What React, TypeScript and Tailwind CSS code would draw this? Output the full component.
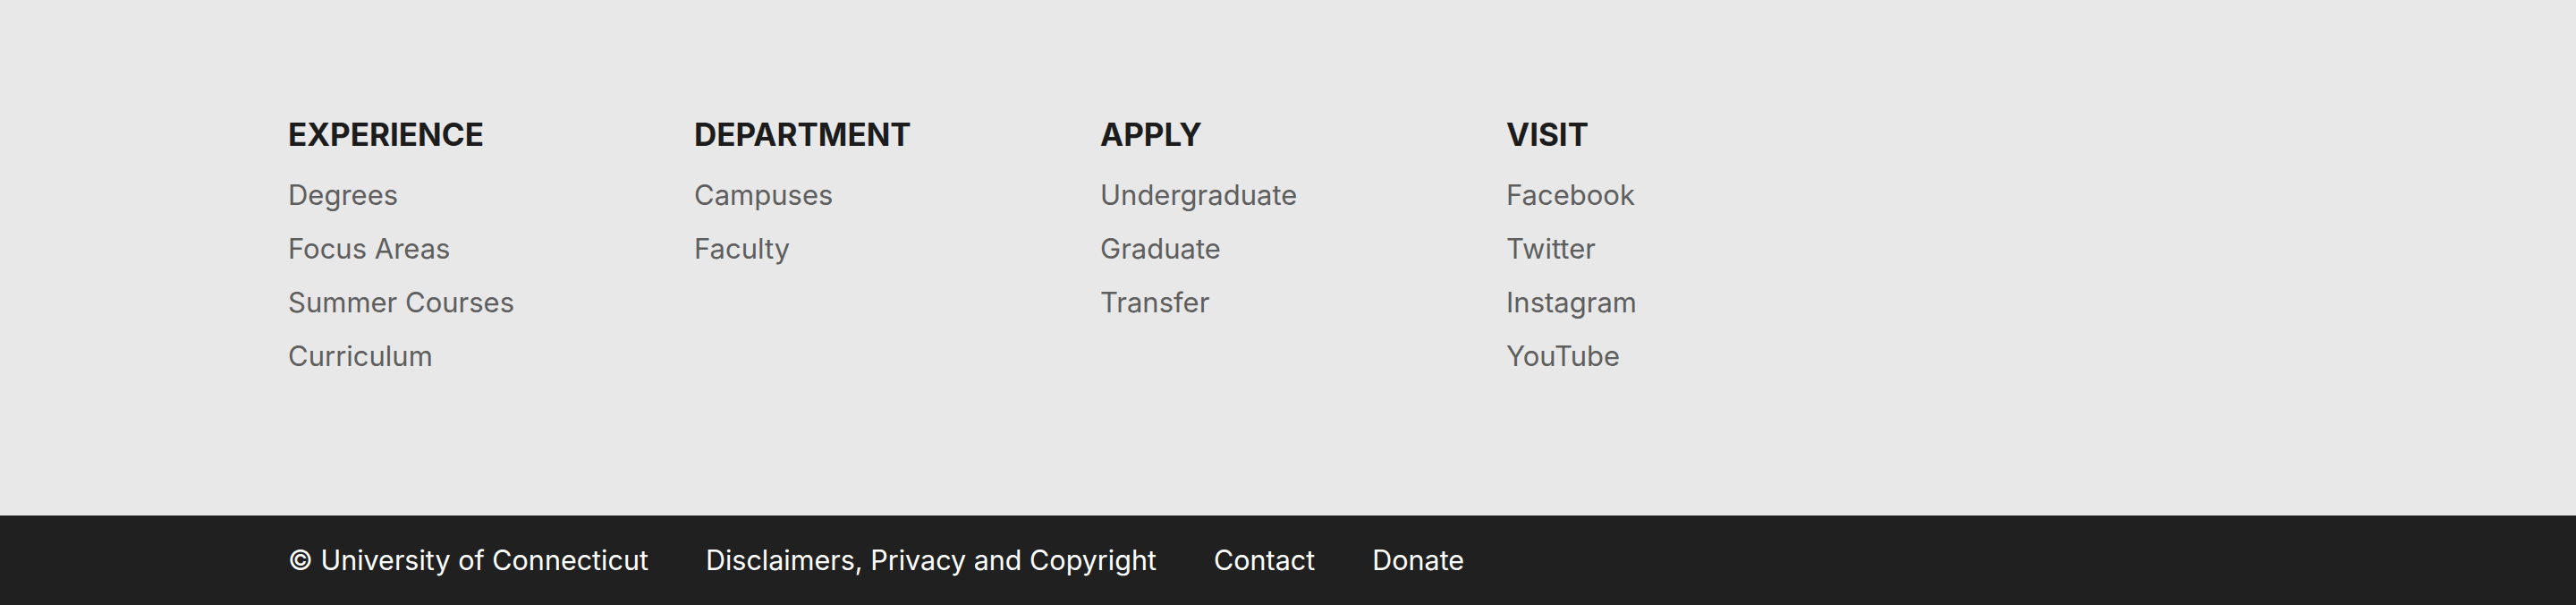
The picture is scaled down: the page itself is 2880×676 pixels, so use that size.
const columns = [
  { title: "EXPERIENCE", links: ["Degrees", "Focus Areas", "Summer Courses", "Curriculum"] },
  { title: "DEPARTMENT", links: ["Campuses", "Faculty"] },
  { title: "APPLY", links: ["Undergraduate", "Graduate", "Transfer"] },
  { title: "VISIT", links: ["Facebook", "Twitter", "Instagram", "YouTube"] },
];

const bottomLinks = [
  "© University of Connecticut",
  "Disclaimers, Privacy and Copyright",
  "Contact",
  "Donate",
];

export default function App() {
  return (
    <footer className="w-full font-['Inter',sans-serif]">
      <div className="bg-[#e8e8e8] h-[576px] pt-[129px] pl-[322px]">
        <div className="flex">
          {columns.map((col) => (
            <div key={col.title} className="w-[454px]">
              <h3 className="text-[35px] leading-[42px] font-bold text-[#1c1c1c]">
                {col.title}
              </h3>
              <ul className="mt-[17px]">
                {col.links.map((l) => (
                  <li key={l}>
                    <a href="#" className="text-[31px] leading-[60px] text-[#5e5e5e]">
                      {l}
                    </a>
                  </li>
                ))}
              </ul>
            </div>
          ))}
        </div>
      </div>
      <div className="bg-[#202020] h-[100px] pl-[322px] flex items-center gap-[64px]">
        {bottomLinks.map((l) => (
          <a key={l} href="#" className="text-[30.5px] text-white">
            {l}
          </a>
        ))}
      </div>
    </footer>
  );
}
